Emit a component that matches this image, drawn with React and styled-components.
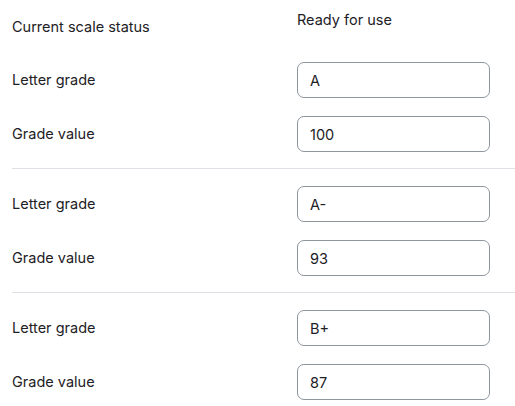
import React from 'react';
import styled, { createGlobalStyle } from 'styled-components';

const GlobalStyle = createGlobalStyle`
    body {
        margin: 0;
        background: #fff;
        font-family: Inter, "Liberation Sans", Arial, sans-serif;
        font-size: 14.5px;
        color: #1d2125;
    }
`;

const grades = [
    { letter: 'A', value: '100' },
    { letter: 'A-', value: '93' },
    { letter: 'B+', value: '87' },
];

const App = () => {
    return (
        <>
            <GlobalStyle />
            <Page>
                <StatusRow>
                    <StatusLabel>Current scale status</StatusLabel>
                    <StatusValue>Ready for use</StatusValue>
                </StatusRow>
                {grades.map((g, i) => (
                    <Group key={i} $last={i === grades.length - 1}>
                        <Row>
                            <Label htmlFor={`letter-${i}`}>Letter grade</Label>
                            <Input id={`letter-${i}`} type="text" defaultValue={g.letter} />
                        </Row>
                        <Row>
                            <Label htmlFor={`value-${i}`}>Grade value</Label>
                            <Input id={`value-${i}`} type="text" defaultValue={g.value} />
                        </Row>
                    </Group>
                ))}
            </Page>
        </>
    );
};

const Page = styled.div`
    padding: 10px 0 0 12px;
`;

const StatusRow = styled.div`
    display: flex;
    height: 36px;
    margin-bottom: 16px;
`;

const StatusLabel = styled.div`
    width: 285px;
    flex-shrink: 0;
    padding-top: 6px;
    line-height: 22px;
`;

const StatusValue = styled.div`
    margin-top: -1px;
    line-height: 22px;
`;

const Group = styled.div`
    display: flex;
    flex-direction: column;
    gap: 18px;
    padding-bottom: ${(p) => (p.$last ? '0' : '16px')};
    margin-bottom: ${(p) => (p.$last ? '0' : '17px')};
    border-bottom: ${(p) => (p.$last ? 'none' : '1px solid #dee2e6')};
`;

const Row = styled.div`
    display: flex;
    align-items: center;
`;

const Label = styled.label`
    width: 285px;
    flex-shrink: 0;
    line-height: 22px;
`;

const Input = styled.input`
    box-sizing: border-box;
    width: 193px;
    height: 36px;
    padding: 6px 12px;
    border: 1px solid #8f959e;
    border-radius: 7px;
    font: inherit;
    color: #1d2125;
    background: #fff;

    &:focus {
        outline: none;
    }
`;

export default App;
